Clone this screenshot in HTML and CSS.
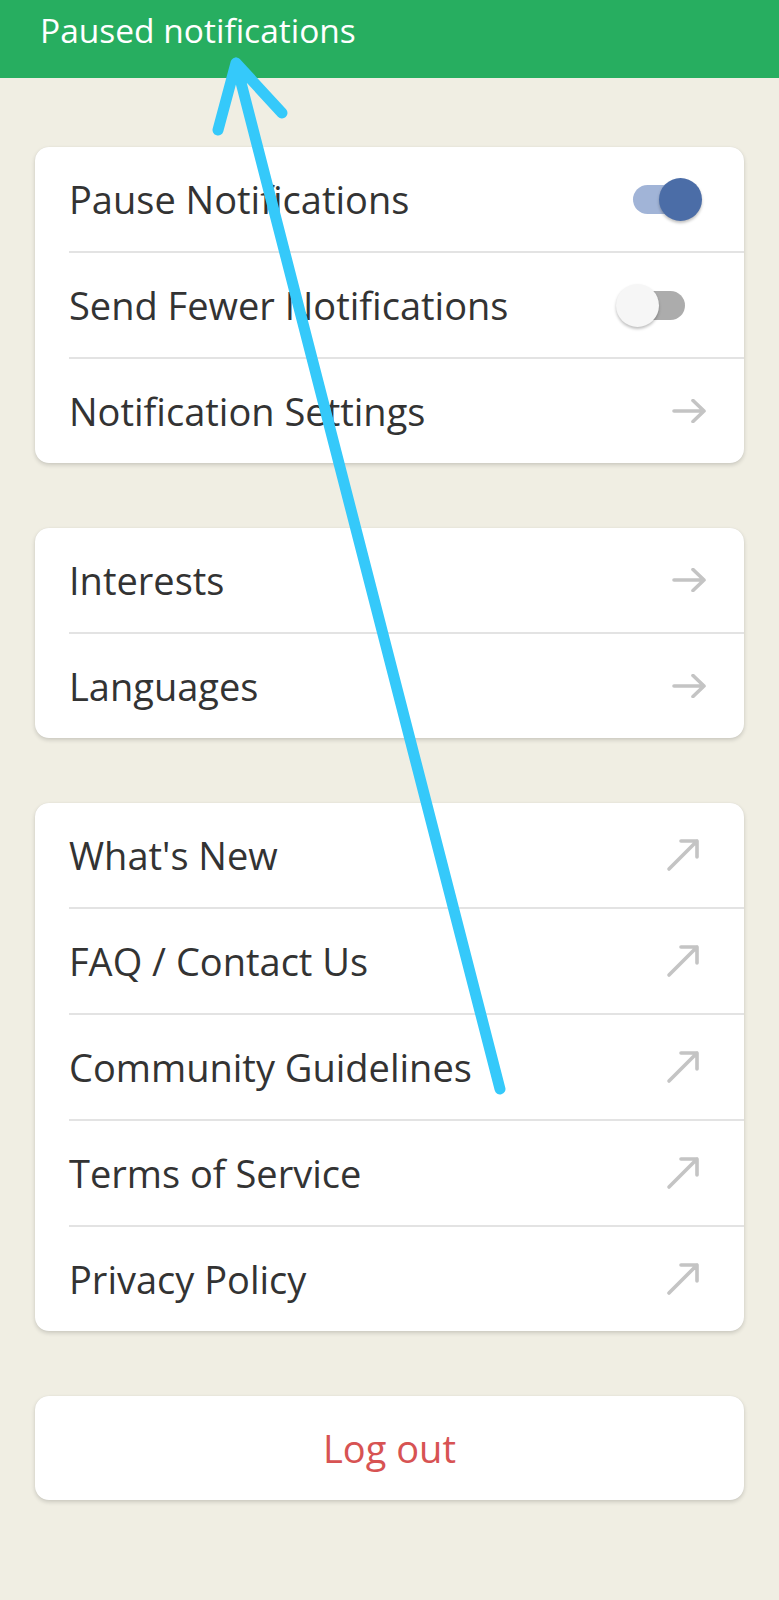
FILE: index.html
```html
<!DOCTYPE html>
<html lang="en">
<head>
<meta charset="utf-8">
<title>Settings</title>
<link rel="stylesheet" href="styles.css">
</head>
<body>
<div class="page">
  <header class="banner">Paused notifications</header>
  <main class="content">
    <section class="card">
      <div class="row">
        <span class="label">Pause Notifications</span>
        <span class="switch on"><span class="track"></span><span class="thumb"></span></span>
      </div>
      <div class="row">
        <span class="label">Send Fewer Notifications</span>
        <span class="switch off"><span class="track"></span><span class="thumb"></span></span>
      </div>
      <div class="row">
        <span class="label">Notification Settings</span>
        <svg class="icon icon-right" width="34" height="24" viewBox="0 0 34 24"><path d="M2 12H32M21 1.5L32 12L21 22.5"/></svg>
      </div>
    </section>

    <section class="card">
      <div class="row">
        <span class="label">Interests</span>
        <svg class="icon icon-right" width="34" height="24" viewBox="0 0 34 24"><path d="M2 12H32M21 1.5L32 12L21 22.5"/></svg>
      </div>
      <div class="row">
        <span class="label">Languages</span>
        <svg class="icon icon-right" width="34" height="24" viewBox="0 0 34 24"><path d="M2 12H32M21 1.5L32 12L21 22.5"/></svg>
      </div>
    </section>

    <section class="card">
      <div class="row">
        <span class="label">What's New</span>
        <svg class="icon icon-ne" width="34" height="34" viewBox="0 0 34 34"><path d="M3 31L31 3M15 3H31V19"/></svg>
      </div>
      <div class="row">
        <span class="label">FAQ / Contact Us</span>
        <svg class="icon icon-ne" width="34" height="34" viewBox="0 0 34 34"><path d="M3 31L31 3M15 3H31V19"/></svg>
      </div>
      <div class="row">
        <span class="label">Community Guidelines</span>
        <svg class="icon icon-ne" width="34" height="34" viewBox="0 0 34 34"><path d="M3 31L31 3M15 3H31V19"/></svg>
      </div>
      <div class="row">
        <span class="label">Terms of Service</span>
        <svg class="icon icon-ne" width="34" height="34" viewBox="0 0 34 34"><path d="M3 31L31 3M15 3H31V19"/></svg>
      </div>
      <div class="row">
        <span class="label">Privacy Policy</span>
        <svg class="icon icon-ne" width="34" height="34" viewBox="0 0 34 34"><path d="M3 31L31 3M15 3H31V19"/></svg>
      </div>
    </section>

    <section class="card logout">
      <span class="logout-label">Log out</span>
    </section>
  </main>

  <svg class="markup" width="779" height="1600" viewBox="0 0 779 1600">
    <path d="M500 1089L236 63M218 130L236 63L282 113"/>
  </svg>
</div>
</body>
</html>
```

FILE: styles.css
```css
html, body {
  margin: 0;
  padding: 0;
}

body {
  background: #f0eee3;
  font-family: "Open Sans", "Noto Sans", sans-serif;
  color: #333333;
}

.page {
  position: relative;
  width: 779px;
  min-height: 1600px;
}

.banner {
  box-sizing: border-box;
  height: 78px;
  background: #27ae60;
  color: #ffffff;
  font-size: 33.5px;
  padding: 7px 0 0 40px;
  line-height: normal;
}

.content {
  display: flex;
  flex-direction: column;
  gap: 65px;
  padding: 69px 35px 0 35px;
}

.card {
  background: #ffffff;
  border-radius: 14px;
  box-shadow: 0 2px 4px rgba(0, 0, 0, 0.16), 0 0 1px rgba(0, 0, 0, 0.08);
  display: flex;
  flex-direction: column;
}

.row {
  height: 104px;
  margin-left: 34px;
  display: flex;
  align-items: center;
  justify-content: space-between;
}

.row + .row {
  border-top: 2px solid #e3e3e3;
}

.label {
  font-size: 38px;
  font-weight: 500;
  line-height: normal;
  color: #333333;
}

.icon {
  fill: none;
  stroke: #c4c4c4;
  stroke-width: 3.6;
  stroke-linecap: round;
  stroke-linejoin: round;
}

.icon-right {
  margin-right: 38px;
}

.icon-ne {
  margin-right: 44px;
}

.switch {
  position: relative;
  width: 86px;
  height: 43px;
  margin-right: 42px;
}

.switch .track {
  position: absolute;
  left: 17px;
  top: 7px;
  width: 52px;
  height: 29px;
  border-radius: 15px;
}

.switch .thumb {
  position: absolute;
  top: 0;
  width: 43px;
  height: 43px;
  border-radius: 50%;
  box-shadow: 0 2px 3px rgba(0, 0, 0, 0.25);
}

.switch.on .track {
  background: #a1b4d7;
}

.switch.on .thumb {
  right: 0;
  background: #4b6da7;
}

.switch.off .track {
  background: #acacac;
}

.switch.off .thumb {
  left: 0;
  background: #f6f6f6;
}

.logout {
  height: 104px;
  align-items: center;
  justify-content: center;
}

.logout-label {
  font-size: 38px;
  font-weight: 500;
  color: #d75353;
  line-height: normal;
}

.markup {
  position: absolute;
  left: 0;
  top: 0;
  pointer-events: none;
  fill: none;
  stroke: #35c9fa;
  stroke-width: 11;
  stroke-linecap: round;
  stroke-linejoin: round;
}
```
